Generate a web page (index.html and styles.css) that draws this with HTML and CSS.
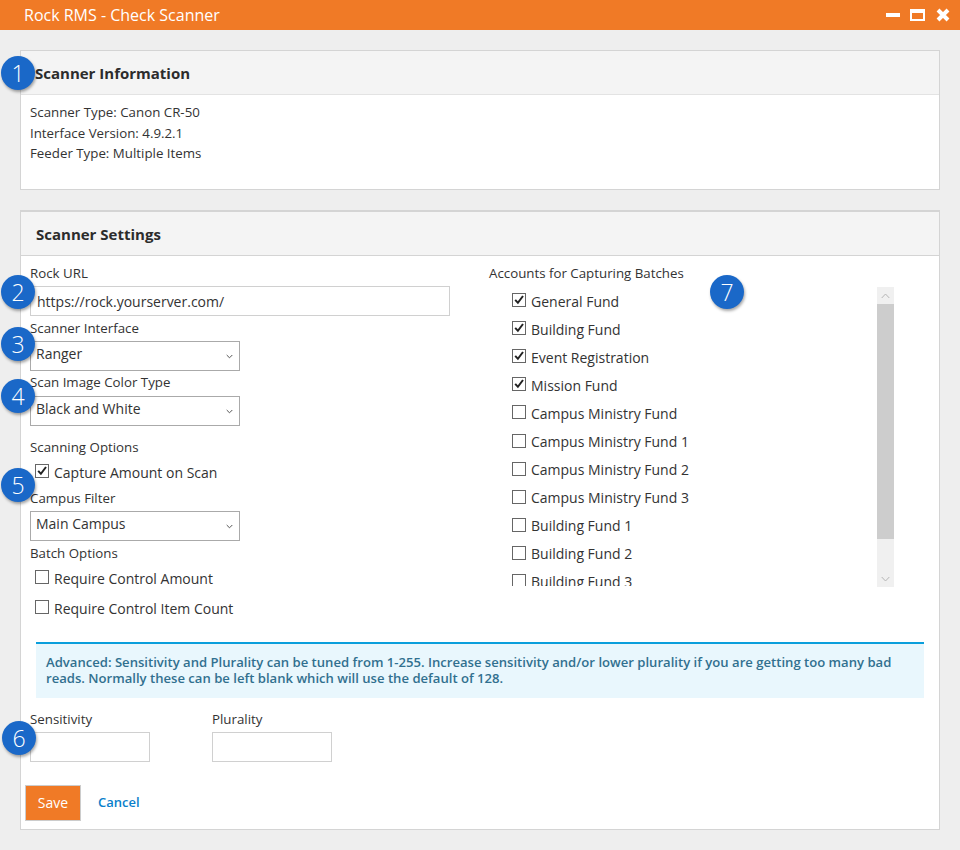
FILE: index.html
```html
<!DOCTYPE html>
<html lang="en">
<head>
<meta charset="utf-8">
<title>Rock RMS - Check Scanner</title>
<link rel="stylesheet" href="styles.css">
</head>
<body>
<header class="titlebar">
  <span class="title">Rock RMS - Check Scanner</span>
  <div class="winctl">
    <svg width="14" height="14" viewBox="0 0 14 14"><rect x="0" y="5" width="14" height="4" fill="#fff"/></svg>
    <svg class="maxi" width="15" height="14" viewBox="0 0 15 14"><path fill="#fff" fill-rule="evenodd" d="M0 1h15v12H0zM2 5v6h11V5z"/></svg>
    <svg width="14" height="14" viewBox="0 0 14 14"><path stroke="#fff" stroke-width="4" d="M2 2l10 10M12 2L2 12"/></svg>
  </div>
</header>
<main class="page">
  <section class="panel info">
    <h2 class="panel-head">Scanner Information</h2>
    <div class="info-body">
      <div>Scanner Type: Canon CR-50</div>
      <div>Interface Version: 4.9.2.1</div>
      <div>Feeder Type: Multiple Items</div>
    </div>
    <span class="badge b1">1</span>
  </section>

  <section class="panel settings">
    <h2 class="panel-head strong">Scanner Settings</h2>
    <div class="columns">
      <div class="left">
        <label class="lbl">Rock URL</label>
        <input class="field url" type="text" value="https://rock.yourserver.com/">
        <label class="lbl l-si">Scanner Interface</label>
        <div class="select"><span>Ranger</span><svg class="chev" width="7" height="5" viewBox="0 0 7 5"><path d="M.7 1l2.8 2.8L6.3 1" fill="none" stroke="#555" stroke-width="1"/></svg></div>
        <label class="lbl l-ic">Scan Image Color Type</label>
        <div class="select s-ic"><span>Black and White</span><svg class="chev" width="7" height="5" viewBox="0 0 7 5"><path d="M.7 1l2.8 2.8L6.3 1" fill="none" stroke="#555" stroke-width="1"/></svg></div>
        <label class="lbl l-so">Scanning Options</label>
        <div class="check opt c-cap"><span class="box"><svg width="12" height="12" viewBox="0 0 12 12"><path d="M2.2 5.8l2.7 3L10 2" fill="none" stroke="#222" stroke-width="2"/></svg></span>Capture Amount on Scan</div>
        <label class="lbl l-cf">Campus Filter</label>
        <div class="select"><span>Main Campus</span><svg class="chev" width="7" height="5" viewBox="0 0 7 5"><path d="M.7 1l2.8 2.8L6.3 1" fill="none" stroke="#555" stroke-width="1"/></svg></div>
        <label class="lbl l-bo">Batch Options</label>
        <div class="check opt c-a"><span class="box"></span>Require Control Amount</div>
        <div class="check opt c-b"><span class="box"></span>Require Control Item Count</div>
      </div>
      <div class="right">
        <label class="lbl">Accounts for Capturing Batches</label>
        <div class="accounts">
          <div class="list">
            <div class="check"><span class="box"><svg width="12" height="12" viewBox="0 0 12 12"><path d="M2.2 5.8l2.7 3L10 2" fill="none" stroke="#222" stroke-width="2"/></svg></span>General Fund</div>
            <div class="check"><span class="box"><svg width="12" height="12" viewBox="0 0 12 12"><path d="M2.2 5.8l2.7 3L10 2" fill="none" stroke="#222" stroke-width="2"/></svg></span>Building Fund</div>
            <div class="check"><span class="box"><svg width="12" height="12" viewBox="0 0 12 12"><path d="M2.2 5.8l2.7 3L10 2" fill="none" stroke="#222" stroke-width="2"/></svg></span>Event Registration</div>
            <div class="check"><span class="box"><svg width="12" height="12" viewBox="0 0 12 12"><path d="M2.2 5.8l2.7 3L10 2" fill="none" stroke="#222" stroke-width="2"/></svg></span>Mission Fund</div>
            <div class="check"><span class="box"></span>Campus Ministry Fund</div>
            <div class="check"><span class="box"></span>Campus Ministry Fund 1</div>
            <div class="check"><span class="box"></span>Campus Ministry Fund 2</div>
            <div class="check"><span class="box"></span>Campus Ministry Fund 3</div>
            <div class="check"><span class="box"></span>Building Fund 1</div>
            <div class="check"><span class="box"></span>Building Fund 2</div>
            <div class="check"><span class="box"></span>Building Fund 3</div>
          </div>
          <div class="scrollbar">
            <div class="sb-btn"><svg width="9" height="6" viewBox="0 0 9 6"><path d="M.7 5L4.5 1l3.8 4" fill="none" stroke="#b5b5b5" stroke-width="1"/></svg></div>
            <div class="sb-thumb"></div>
            <div class="sb-track"></div>
            <div class="sb-btn"><svg width="9" height="6" viewBox="0 0 9 6"><path d="M.7 1l3.8 4 3.8-4" fill="none" stroke="#b5b5b5" stroke-width="1"/></svg></div>
          </div>
        </div>
      </div>
    </div>
    <div class="alert">Advanced: Sensitivity and Plurality can be tuned from 1-255. Increase sensitivity and/or lower plurality if you are getting too many bad reads. Normally these can be left blank which will use the default of 128.</div>
    <div class="tuning">
      <div class="tune"><label class="lbl">Sensitivity</label><input class="field small" type="text"></div>
      <div class="tune"><label class="lbl">Plurality</label><input class="field small" type="text"></div>
    </div>
    <div class="actions">
      <button class="save" type="button">Save</button>
      <a class="cancel" href="#">Cancel</a>
    </div>
    <span class="badge b2">2</span>
    <span class="badge b3">3</span>
    <span class="badge b4">4</span>
    <span class="badge b5">5</span>
    <span class="badge b6">6</span>
    <span class="badge b7">7</span>
  </section>
</main>
</body>
</html>
```

FILE: styles.css
```css
* { box-sizing: border-box; }
html, body { margin: 0; height: 850px; overflow: hidden; }
body {
  background: #eeeeee;
  font-family: "Open Sans", "Noto Sans", sans-serif;
  font-size: 13.3px;
  color: #333;
}
.titlebar {
  height: 30px;
  background: #f07a26;
  color: #fff;
  display: flex;
  align-items: center;
  justify-content: space-between;
  padding: 0 10px 0 24px;
}
.title { font-size: 16px; }
.winctl { display: flex; gap: 10px; align-items: center; }
.maxi { margin-right: 1px; }
.page { padding: 20px 20px 0; }
.panel {
  position: relative;
  background: #fff;
  border: 1px solid #d4d4d4;
}
.panel-head {
  margin: 0;
  height: 44px;
  background: #f4f4f4;
  border-bottom: 1px solid #e3e3e3;
  padding: 0 0 0 14px;
  font-size: 15px;
  font-weight: 700;
  line-height: 44px;
  color: #2c2c2c;
}
.panel-head.strong { height: 45px; line-height: 44px; padding-left: 15px; border: 1px solid #d4d4d4; border-width: 1px 0 1px; }
.info { height: 140px; }
.info-body { padding: 7px 9px; line-height: 20.5px; }
.settings { margin-top: 20px; height: 620px; }
.columns { display: flex; padding: 8px 9px 0; height: 386px; }
.left { width: 459px; display: flex; flex-direction: column; align-items: flex-start; }
.right { flex: 1; }
.lbl { display: block; height: 18px; line-height: 18px; }
.field {
  display: block;
  border: 1px solid #d0d0d0;
  background: #fff;
  font: inherit;
  color: #333;
  outline: none;
}
.url { width: 420px; height: 30px; margin-top: 4px; padding: 0 6px; font-size: 14px; }
.select {
  width: 210px;
  height: 30px;
  margin-top: 4px;
  border: 1px solid #aaa;
  padding: 0 6px 6px 5px;
  display: flex;
  align-items: center;
  justify-content: space-between;
  font-size: 14px;
}
.chev { position: relative; top: 3px; }
.l-si { margin-top: 3px; }
.l-ic { margin-top: 2px; }
.s-ic { margin-top: 5px; }
.l-so { margin-top: 12px; }
.l-cf { margin-top: 3px; }
.l-bo { margin-top: 3px; }
.check {
  display: flex;
  align-items: center;
  height: 28px;
  font-size: 14px;
  white-space: nowrap;
}
.list .check { height: 28.1px; }
.box {
  width: 14px;
  height: 14px;
  border: 1px solid #666;
  margin-right: 5px;
  flex: none;
  display: flex;
  align-items: center;
  justify-content: center;
  position: relative;
  top: -1px;
  background: #fff;
}
.opt { padding-left: 5px; }
.c-cap { margin-top: 2px; }
.c-a { margin-top: 2px; }
.c-b { margin-top: 2px; }
.accounts { display: flex; margin-top: 5px; height: 300px; width: 405px; }
.list { width: 388px; height: 299px; overflow: hidden; padding: 0 0 0 23px; }
.scrollbar { width: 17px; height: 300px; background: #f0f0f0; display: flex; flex-direction: column; }
.sb-btn { height: 17px; display: flex; align-items: center; justify-content: center; flex: none; }
.sb-thumb { height: 235px; background: #cdcdcd; flex: none; }
.sb-track { flex: 1; }
.alert {
  margin: 0 15px;
  height: 56px;
  background: #e9f7fd;
  border-top: 2px solid #0a9fdc;
  padding: 10px 10px 0;
  line-height: 16px;
  font-size: 13.1px;
  font-weight: 600;
  color: #31708f;
}
.tuning { display: flex; gap: 62px; padding: 12px 9px 0; }
.tune { width: 120px; }
.small { width: 120px; height: 30px; margin-top: 4px; }
.actions { display: flex; align-items: center; margin-top: 23px; padding-left: 4px; }
.save {
  width: 56px;
  height: 36px;
  background: #f07a26;
  border: 1px solid #ccc;
  color: #fff;
  font: inherit;
  font-size: 14px;
  padding: 0 0 2px;
}
.cancel { margin-left: 17px; padding-bottom: 2px; color: #0a7fcb; text-decoration: none; font-weight: 600; font-size: 13px; }
.badge {
  position: absolute;
  width: 34px;
  height: 34px;
  border-radius: 50%;
  background: #1a68c8;
  color: #fff;
  box-shadow: 1px 2px 3px rgba(0,0,0,.35);
  display: flex;
  align-items: center;
  justify-content: center;
  font-size: 23px;
  font-weight: 300;
  line-height: 1;
}
.b1 { left: -20px; top: 5px; }
.b2 { left: -20px; top: 64px; }
.b3 { left: -20px; top: 116px; }
.b4 { left: -20px; top: 168px; }
.b5 { left: -20px; top: 257px; }
.b6 { left: -19px; top: 510px; }
.b7 { left: 689px; top: 64px; }
```
